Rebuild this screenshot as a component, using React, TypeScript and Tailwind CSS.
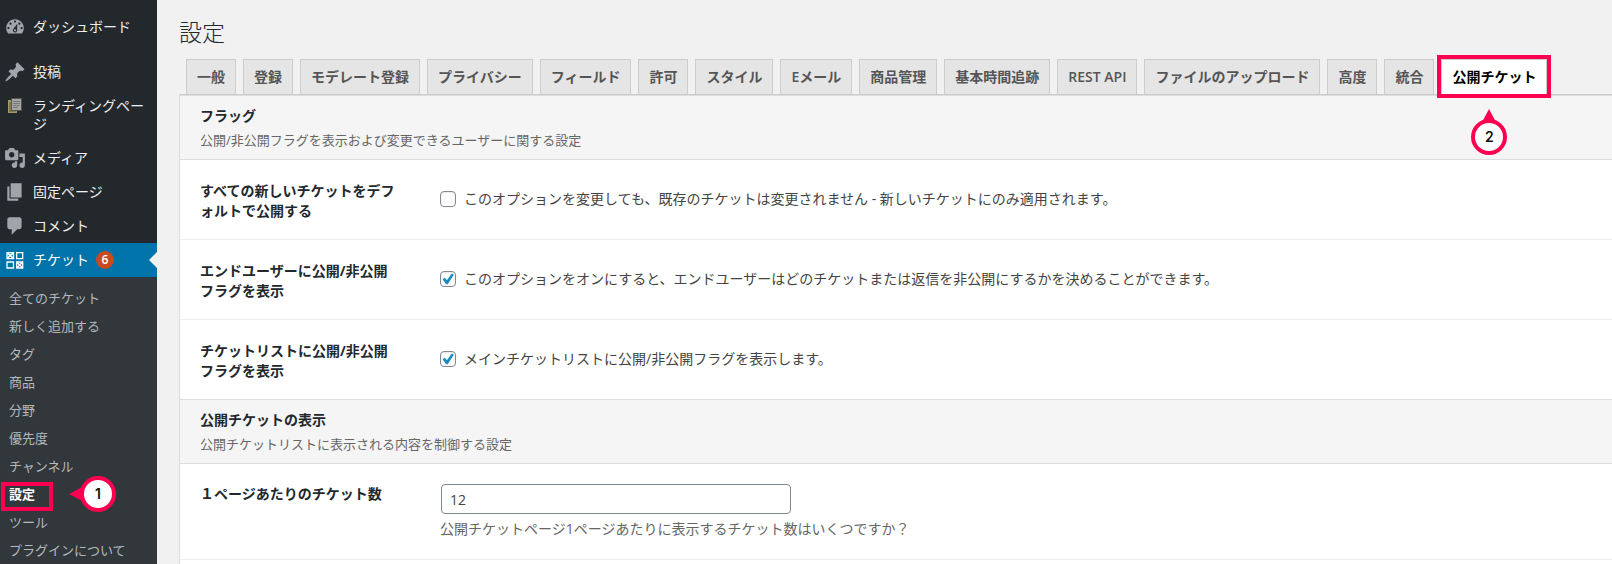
import { useState, type ReactNode } from 'react';

type MenuItem = {
  label: string;
  icon: ReactNode;
};

type CheckRow = {
  id: string;
  label: string;
  text: string;
  checked: boolean;
};

function Dashicon({ d }: { d: string }) {
  return (
    <svg viewBox="0 0 20 20" className="h-[22px] w-[22px] fill-[#a0a5aa]" aria-hidden="true">
      <path d={d} />
    </svg>
  );
}

function LandingIcon() {
  return (
    <svg viewBox="0 0 22 22" className="h-[22px] w-[22px]" aria-hidden="true">
      <path d="M4 5h9v13H4z" fill="#a39a68" />
      <path d="M5 8h3M5 10h3M5 12h3M5 14h3M5 16h7" stroke="#5d5840" />
      <path d="M7 3h11v13H7z" fill="#55534a" />
      <path d="M8 4h9v11H8z" fill="#a6a6a2" />
      <path d="M9 6.5h7M9 8.5h7M9 10.5h7M9 12.5h5" stroke="#77777a" />
    </svg>
  );
}

function TicketsIcon() {
  return (
    <svg viewBox="0 0 22 22" className="h-[22px] w-[22px]" aria-hidden="true">
      <g fill="none" stroke="#fff" strokeWidth="1.3">
        <path d="M3 3.6h6.5v6H3zM12.7 3.6h6v6h-6zM3 13h6.5v6H3zM12.7 13h6v6h-6z" />
        <path d="M3 3.6l6.5 6M9.5 3.6l-6.5 6M12.7 13l6 6M18.7 13l-6 6" strokeWidth="1.6" />
      </g>
    </svg>
  );
}

const topItem: MenuItem = {
  label: 'ダッシュボード',
  icon: (
    <Dashicon d="M3.76 16h12.48c1.1-1.37 1.76-3.11 1.76-5 0-4.42-3.58-8-8-8s-8 3.58-8 8c0 1.89.66 3.63 1.76 5zM10 4c.55 0 1 .45 1 1s-.45 1-1 1-1-.45-1-1 .45-1 1-1zM6 6c.55 0 1 .45 1 1s-.45 1-1 1-1-.45-1-1 .45-1 1-1zm8 0c.55 0 1 .45 1 1s-.45 1-1 1-1-.45-1-1 .45-1 1-1zm-5.37 5.55L12 7v6c0 1.1-.9 2-2 2s-2-.9-2-2c0-.57.24-1.08.63-1.45zM4 10c.55 0 1 .45 1 1s-.45 1-1 1-1-.45-1-1 .45-1 1-1zm12 0c.55 0 1 .45 1 1s-.45 1-1 1-1-.45-1-1 .45-1 1-1zm-5 3c0-.55-.45-1-1-1s-1 .45-1 1 .45 1 1 1 1-.45 1-1z" />
  ),
};

const menuItems: MenuItem[] = [
  {
    label: '投稿',
    icon: (
      <Dashicon d="M10.44 3.02l1.82-1.82 6.36 6.35-1.83 1.82c-1.05-.68-2.48-.57-3.41.36l-.75.75c-.92.93-1.04 2.35-.35 3.41l-1.83 1.82-2.41-2.41-2.8 2.79c-.42.42-3.38 2.71-3.8 2.29s1.86-3.39 2.28-3.81l2.79-2.79L4.1 9.36l1.83-1.82c1.05.69 2.48.57 3.4-.36l.75-.75c.93-.92 1.05-2.35.36-3.41z" />
    ),
  },
  { label: 'ランディングページ', icon: <LandingIcon /> },
  {
    label: 'メディア',
    icon: (
      <Dashicon d="M13 11V4c0-.55-.45-1-1-1h-1.67L9 1H5L3.67 3H2c-.55 0-1 .45-1 1v7c0 .55.45 1 1 1h10c.55 0 1-.45 1-1zM7 4.5c1.38 0 2.5 1.12 2.5 2.5S8.38 9.5 7 9.5 4.5 8.38 4.5 7 5.62 4.5 7 4.5zM14 6h5v10.5c0 1.38-1.12 2.5-2.5 2.5S14 17.88 14 16.5s1.12-2.5 2.5-2.5c.17 0 .34.02.5.05V9h-3V6zm-4 8.05V13h2v3.5c0 1.38-1.12 2.5-2.5 2.5S7 17.88 7 16.5 8.12 14 9.5 14c.17 0 .34.02.5.05z" />
    ),
  },
  { label: '固定ページ', icon: <Dashicon d="M6 15V2h10v13H6zm-1 1h8v2H3V5h2v11z" /> },
  {
    label: 'コメント',
    icon: (
      <Dashicon d="M5 2h9c1.1 0 2 .9 2 2v7c0 1.1-.9 2-2 2h-2l-5 5v-5H5c-1.1 0-2-.9-2-2V4c0-1.1.9-2 2-2z" />
    ),
  },
];

const ticketItems = [
  '全てのチケット',
  '新しく追加する',
  'タグ',
  '商品',
  '分野',
  '優先度',
  'チャンネル',
  '設定',
  'ツール',
  'プラグインについて',
];

const tabs = [
  '一般',
  '登録',
  'モデレート登録',
  'プライバシー',
  'フィールド',
  '許可',
  'スタイル',
  'Eメール',
  '商品管理',
  '基本時間追跡',
  'REST API',
  'ファイルのアップロード',
  '高度',
  '統合',
  '公開チケット',
];

const checkRows: CheckRow[] = [
  {
    id: 'default-public',
    label: 'すべての新しいチケットをデフォルトで公開する',
    text: 'このオプションを変更しても、既存のチケットは変更されません - 新しいチケットにのみ適用されます。',
    checked: false,
  },
  {
    id: 'show-flag',
    label: 'エンドユーザーに公開/非公開フラグを表示',
    text: 'このオプションをオンにすると、エンドユーザーはどのチケットまたは返信を非公開にするかを決めることができます。',
    checked: true,
  },
  {
    id: 'show-flag-list',
    label: 'チケットリストに公開/非公開フラグを表示',
    text: 'メインチケットリストに公開/非公開フラグを表示します。',
    checked: true,
  },
];

function MenuLink({ item }: { item: MenuItem }) {
  return (
    <a href="#" className="flex items-start gap-[7px] py-2 pr-2 pl-1 text-sm leading-[18px] text-[#eee]">
      <span className="flex h-[18px] shrink-0 items-center">{item.icon}</span>
      <span>{item.label}</span>
    </a>
  );
}

// numbered marker whose tip points left or up
function Marker({ n, point }: { n: number; point: 'left' | 'up' }) {
  return (
    <span className={`relative flex items-center justify-center ${point === 'left' ? 'h-9 w-[47px] pl-[11px]' : 'h-[46px] w-9 pt-[10px]'}`}>
      {point === 'left' ? (
        <svg viewBox="0 0 47 36" className="absolute inset-0 h-9 w-[47px]" aria-hidden="true">
          <path d="M0 18L17 9v18z" fill="#ff0050" />
          <circle cx="29" cy="18" r="16" fill="#fff" stroke="#ff0050" strokeWidth="4" />
        </svg>
      ) : (
        <svg viewBox="0 0 36 46" className="absolute inset-0 h-[46px] w-9" aria-hidden="true">
          <path d="M18 0l9 17H9z" fill="#ff0050" />
          <circle cx="18" cy="28" r="16" fill="#fff" stroke="#ff0050" strokeWidth="4" />
        </svg>
      )}
      <span className="relative font-['Inter',sans-serif] text-sm leading-5 font-semibold text-[#111]">{n}</span>
    </span>
  );
}

function SectionHeader({ title, text }: { title: string; text: string }) {
  return (
    <div className="border-b border-[#ddd] bg-[#f5f5f5] px-5 pt-[10px] pb-[9px]">
      <h2 className="text-sm leading-5 font-bold text-[#23282d]">{title}</h2>
      <p className="mt-1 text-[13px] leading-5 text-[#666]">{text}</p>
    </div>
  );
}

function Checkbox({ id, checked }: { id: string; checked: boolean }) {
  const [on, setOn] = useState(checked);
  return (
    <span className="relative h-4 w-4 shrink-0">
      <input
        id={id}
        type="checkbox"
        checked={on}
        onChange={(e) => setOn(e.target.checked)}
        className="block h-4 w-4 appearance-none rounded border border-[#7e8993] bg-white shadow-[inset_0_1px_2px_rgba(0,0,0,0.1)]"
      />
      {on && (
        <svg viewBox="0 0 16 16" className="pointer-events-none absolute inset-0 h-4 w-4" aria-hidden="true">
          <path d="M2.6 8.2l2.3-1.4 2 2.5 4.8-6.7 2.1 1.2-6 9.4H6z" fill="#1e8cbe" />
        </svg>
      )}
    </span>
  );
}

export default function App() {
  const [perPage, setPerPage] = useState('12');

  return (
    <div className="flex min-h-screen bg-[#f1f1f1] font-['Open_Sans','Noto_Sans_CJK_JP',sans-serif] text-[#444]">
      <nav className="w-[157px] shrink-0 bg-[#23282d] pt-[10px]">
        <MenuLink item={topItem} />
        <div className="h-[11px]" />
        {menuItems.map((item) => (
          <MenuLink key={item.label} item={item} />
        ))}

        <a href="#" className="relative flex items-center gap-[7px] bg-[#0073aa] py-2 pl-1 text-sm leading-[18px] text-white">
          <span className="flex h-[18px] shrink-0 items-center">
            <TicketsIcon />
          </span>
          <span>チケット</span>
          <span className="flex h-[18px] w-[18px] items-center justify-center rounded-full bg-[#ca4a1f] text-xs font-semibold">
            6
          </span>
          <span className="absolute top-1/2 right-0 h-0 w-0 -translate-y-1/2 border-y-8 border-r-8 border-y-transparent border-r-[#f1f1f1]" />
        </a>
        <ul className="bg-[#32373c] pt-[7px]">
          {ticketItems.map((label) => (
            <li key={label} className="relative">
              <a
                href="#"
                className={`block pl-[9px] text-[13px] leading-7 ${label === '設定' ? 'font-bold text-white' : 'text-[#b4b9be]'}`}
              >
                {label}
              </a>
              {label === '設定' && (
                <>
                  <span className="pointer-events-none absolute top-0.5 left-px h-[29px] w-[52px] border-4 border-[#ff0050]" />
                  <span className="absolute -top-1 left-[69px]">
                    <Marker n={1} point="left" />
                  </span>
                </>
              )}
            </li>
          ))}
        </ul>
      </nav>

      <main className="flex min-w-0 flex-1 flex-col pl-[22px]">
        <h1 className="pt-4 text-[23px] leading-8 font-light text-[#23282d]">設定</h1>
        <div className="mt-[11px] flex gap-[7px] border-b border-[#ccc] pl-[7px]">
          {tabs.map((tab) => {
            const active = tab === '公開チケット';
            return (
              <div key={tab} className="relative shrink-0">
                <a
                  href="#"
                  className={`block border border-b-0 border-[#ccc] px-[10px] py-[5px] text-sm leading-6 font-semibold ${active ? 'bg-white text-black' : 'bg-[#e5e5e5] text-[#555]'}`}
                >
                  {tab}
                </a>
                {active && (
                  <>
                    <span className="pointer-events-none absolute -inset-1 border-4 border-[#ff0050]" />
                    <span className="absolute top-[50px] left-[30px] z-10">
                      <Marker n={2} point="up" />
                    </span>
                  </>
                )}
              </div>
            );
          })}
        </div>

        <form className="flex-1 border-t border-l border-[#ddd] bg-white">
          <SectionHeader title="フラッグ" text="公開/非公開フラグを表示および変更できるユーザーに関する設定" />
          {checkRows.map((row, i) => (
            <div
              key={row.id}
              className={`flex gap-10 border-b px-5 pt-[21px] pb-[18px] ${i === checkRows.length - 1 ? 'border-[#ddd]' : 'border-[#eee]'}`}
            >
              <label htmlFor={row.id} className="w-[200px] shrink-0 text-sm leading-5 font-bold text-[#23282d]">
                {row.label}
              </label>
              <div className="flex items-center gap-2 pb-1 text-sm leading-5">
                <Checkbox id={row.id} checked={row.checked} />
                <label htmlFor={row.id}>{row.text}</label>
              </div>
            </div>
          ))}

          <SectionHeader title="公開チケットの表示" text="公開チケットリストに表示される内容を制御する設定" />
          <div className="flex gap-10 border-b border-[#eee] px-5 py-5">
            <label htmlFor="per-page" className="w-[200px] shrink-0 text-sm leading-5 font-bold text-[#23282d]">
              １ページあたりのチケット数
            </label>
            <div>
              <input
                id="per-page"
                type="text"
                value={perPage}
                onChange={(e) => setPerPage(e.target.value)}
                className="ml-px block h-[30px] w-[350px] rounded border border-[#7e8993] bg-white px-2 text-sm text-[#444]"
              />
              <p className="mt-[5px] text-sm leading-5 text-[#666]">
                公開チケットページ1ページあたりに表示するチケット数はいくつですか？
              </p>
            </div>
          </div>
        </form>
      </main>
    </div>
  );
}
